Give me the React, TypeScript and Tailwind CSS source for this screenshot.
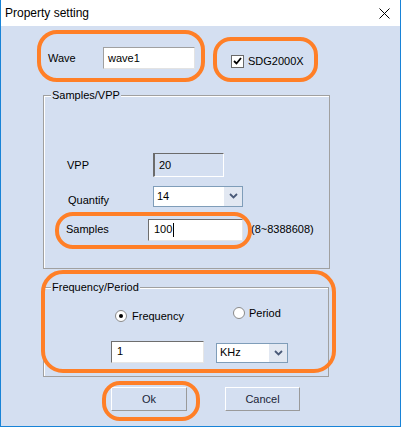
import React from "react";

const font = { fontFamily: '"Liberation Sans", Arial, sans-serif' };

const Chevron = () => (
  <svg width="9" height="6" viewBox="0 0 9 6">
    <path d="M1 1 L4.5 4.5 L8 1" fill="none" stroke="#4a5a78" strokeWidth="1.8" />
  </svg>
);

const Combo = ({ value, w, h }: { value: string; w: string; h: string }) => (
  <div className={`${w} ${h} flex border border-[#7f9db9] bg-white`}>
    <span className="flex-1 pl-[3px] flex items-center text-[11px] text-black">{value}</span>
    <span className="w-[18px] bg-[#e2e8f2] flex items-center justify-center">
      <Chevron />
    </span>
  </div>
);

const Oval = ({ cls }: { cls: string }) => (
  <div className={`absolute border-[4px] border-[#ff7f27] rounded-[18px] pointer-events-none ${cls}`} />
);

export default function App() {
  return (
    <div
      className="relative w-[401px] h-[427px] bg-[#d4dff1] border-x border-b border-[#1883d7] overflow-hidden"
      style={font}
    >
      {/* title bar */}
      <div className="h-[26px] bg-white flex items-center justify-between pl-[4px] pr-[10px]">
        <span className="text-[12px] text-black">Property setting</span>
        <svg width="11" height="11" viewBox="0 0 11 11">
          <path d="M0.5 0.5 L10.5 10.5 M10.5 0.5 L0.5 10.5" stroke="#000" strokeWidth="1" />
        </svg>
      </div>

      <div className="flex flex-col text-[11px] text-black">
        {/* wave row */}
        <div className="mt-[21px] flex items-start h-[22px]">
          <span className="ml-[47px] w-[55px] h-[22px] flex items-center">Wave</span>
          <div className="w-[92px] h-[22px] bg-white border-t border-l border-[#a0a0a0] border-b-[#e3e3e3] border-r-[#e3e3e3] border-b border-r flex items-center pl-[4px]">
            wave1
          </div>
          <div className="ml-[36px] mt-[6px] flex items-center">
            <span className="w-[13px] h-[13px] bg-white border border-[#6a6a6a] flex items-center justify-center">
              <svg width="9" height="8" viewBox="0 0 9 8">
                <path d="M1 4 L3.5 6.5 L8 1" fill="none" stroke="#000" strokeWidth="1.8" />
              </svg>
            </span>
            <span className="ml-[4px]">SDG2000X</span>
          </div>
        </div>

        {/* Samples/VPP group */}
        <div className="relative mt-[26px] ml-[42px] w-[287px] h-[174px] border border-[#a0a0a0] shadow-[inset_1px_1px_0_#fff]">
          <span className="absolute -top-[8px] left-[7px] px-[1px] bg-[#d4dff1] leading-[14px]">Samples/VPP</span>
          <div className="flex flex-col">
            <div className="mt-[57px] flex items-center">
              <span className="ml-[23px] w-[86px]">VPP</span>
              <div className="w-[71px] h-[24px] border-t border-l-2 border-[#6b6b6b] border-b border-r border-b-white border-r-white flex items-center pl-[4px]">
                20
              </div>
            </div>
            <div className="mt-[7px] flex items-center">
              <span className="ml-[24px] w-[85px] pt-[8px]">Quantify</span>
              <Combo value="14" w="w-[90px]" h="h-[21px]" />
            </div>
            <div className="mt-[10px] flex items-center">
              <span className="ml-[22px] w-[82px]">Samples</span>
              <div className="w-[95px] h-[22px] bg-white border-t border-l border-[#6e6e6e] border-b border-r border-b-[#e6e6e6] border-r-[#e6e6e6] flex items-center pl-[5px]">
                100<span className="ml-[1px] w-[1px] h-[14px] bg-black" />
              </div>
              <span className="ml-[8px]">(8~8388608)</span>
            </div>
          </div>
        </div>

        {/* Frequency/Period group */}
        <div className="relative mt-[18px] ml-[42px] w-[286px] h-[90px] border border-[#a0a0a0] shadow-[inset_1px_1px_0_#fff]">
          <span className="absolute -top-[8px] left-[7px] px-[1px] bg-[#d4dff1] leading-[14px]">Frequency/Period</span>
          <div className="flex flex-col">
            <div className="mt-[17px] flex items-start">
              <div className="ml-[71px] w-[118px] mt-[3px] flex items-center">
                <span className="w-[12px] h-[12px] rounded-full bg-white border border-[#8a8a8a] flex items-center justify-center">
                  <span className="w-[4px] h-[4px] rounded-full bg-black" />
                </span>
                <span className="ml-[5px]">Frequency</span>
              </div>
              <div className="flex items-center">
                <span className="w-[12px] h-[12px] rounded-full bg-white border border-[#8a8a8a]" />
                <span className="ml-[4px]">Period</span>
              </div>
            </div>
            <div className="mt-[16px] flex items-start">
              <div className="ml-[67px] w-[93px] h-[22px] bg-white border-t border-l border-[#6e6e6e] border-b border-r border-b-[#e6e6e6] border-r-[#e6e6e6] flex items-center pl-[5px]">
                1
              </div>
              <div className="ml-[12px] mt-[2px]">
                <Combo value="KHz" w="w-[72px]" h="h-[20px]" />
              </div>
            </div>
          </div>
        </div>

        {/* buttons */}
        <div className="mt-[10px] flex items-center text-[#1b2538]">
          <button className="ml-[110px] w-[76px] h-[24px] bg-[#d4dff1] border border-t-white border-l-white border-b-[#9a9a9a] border-r-[#9a9a9a] text-[11px]">
            Ok
          </button>
          <button className="ml-[38px] w-[75px] h-[24px] bg-[#d4dff1] border border-t-white border-l-white border-b-[#9a9a9a] border-r-[#9a9a9a] text-[11px]">
            Cancel
          </button>
        </div>
      </div>

      {/* annotation ovals */}
      <Oval cls="left-[36px] top-[30px] w-[168px] h-[52px] rounded-[20px]" />
      <Oval cls="left-[212px] top-[37px] w-[105px] h-[45px]" />
      <Oval cls="left-[54px] top-[212px] w-[197px] h-[37px]" />
      <Oval cls="left-[40px] top-[270px] w-[295px] h-[103px] rounded-[22px]" />
      <Oval cls="left-[101px] top-[381px] w-[98px] h-[40px] rounded-[14px]" />
    </div>
  );
}
